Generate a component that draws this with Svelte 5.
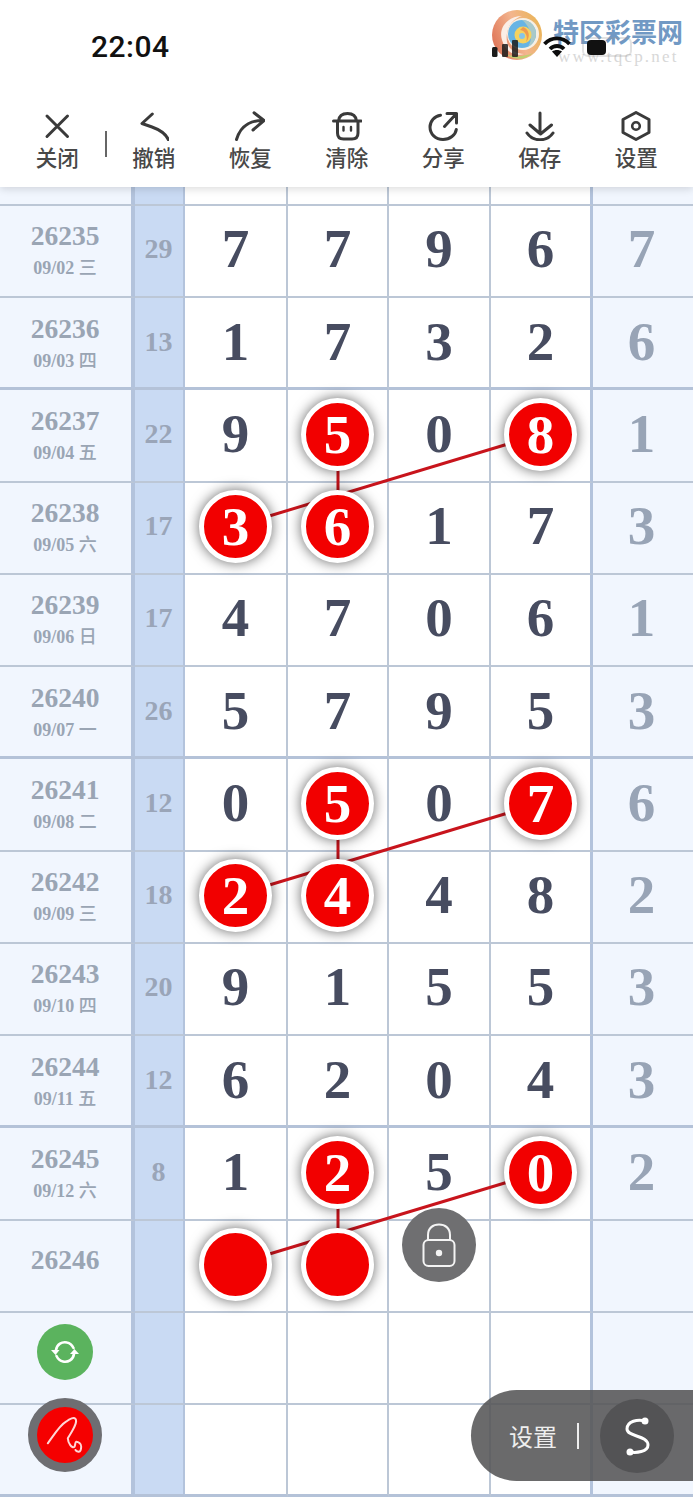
<script>
	const tools = [
		{ label: '关闭', icon: 'close' },
		{ label: '撤销', icon: 'undo' },
		{ label: '恢复', icon: 'redo' },
		{ label: '清除', icon: 'clear' },
		{ label: '分享', icon: 'share' },
		{ label: '保存', icon: 'save' },
		{ label: '设置', icon: 'gear' }
	];

	// hit = positions of the four digits that carry a red ball
	const rows = [
		{ no: '26235', date: '09/02', day: '三', sum: '29', nums: ['7', '7', '9', '6'], tail: '7', kind: 'mid', hit: [] },
		{ no: '26236', date: '09/03', day: '四', sum: '13', nums: ['1', '7', '3', '2'], tail: '6', kind: 'last', hit: [] },
		{ no: '26237', date: '09/04', day: '五', sum: '22', nums: ['9', '5', '0', '8'], tail: '1', kind: 'first', hit: [1, 3] },
		{ no: '26238', date: '09/05', day: '六', sum: '17', nums: ['3', '6', '1', '7'], tail: '3', kind: 'mid', hit: [0, 1] },
		{ no: '26239', date: '09/06', day: '日', sum: '17', nums: ['4', '7', '0', '6'], tail: '1', kind: 'mid', hit: [] },
		{ no: '26240', date: '09/07', day: '一', sum: '26', nums: ['5', '7', '9', '5'], tail: '3', kind: 'last', hit: [] },
		{ no: '26241', date: '09/08', day: '二', sum: '12', nums: ['0', '5', '0', '7'], tail: '6', kind: 'first', hit: [1, 3] },
		{ no: '26242', date: '09/09', day: '三', sum: '18', nums: ['2', '4', '4', '8'], tail: '2', kind: 'mid', hit: [0, 1] },
		{ no: '26243', date: '09/10', day: '四', sum: '20', nums: ['9', '1', '5', '5'], tail: '3', kind: 'mid', hit: [] },
		{ no: '26244', date: '09/11', day: '五', sum: '12', nums: ['6', '2', '0', '4'], tail: '3', kind: 'last', hit: [] },
		{ no: '26245', date: '09/12', day: '六', sum: '8', nums: ['1', '2', '5', '0'], tail: '2', kind: 'first', hit: [1, 3] },
		{ no: '26246', date: '', day: '', sum: '', nums: ['', '', '', ''], tail: '', kind: 'mid', hit: [0, 1] }
	];

	const links = [
		[541, 434, 236, 526],
		[338, 434, 338, 526],
		[541, 803, 236, 895],
		[338, 803, 338, 895],
		[541, 1172, 236, 1264],
		[338, 1172, 338, 1264]
	];
</script>

{#snippet toolIcon(name)}
	<svg class="tool-icon" viewBox="0 0 30 30" fill="none" stroke="#3a3a3a" stroke-width="3" stroke-linecap="round" stroke-linejoin="round">
		{#if name === 'close'}
			<path d="M5 5 L25.500 25.500 M25.500 5 L5 25.500" />
		{:else if name === 'undo'}
			<path d="M13.300 3 L3 12.500 L13 16 C20 18.500 27 23 29.500 29" />
		{:else if name === 'redo'}
			<path d="M19 1.800 L29 9.500 L18 19 M29 9.500 C18 9 6 13 1.500 28.500" />
		{:else if name === 'clear'}
			<path d="M6.500 10 C7 5 10.500 2.500 15.500 2.500 C20.500 2.500 24 5 24.500 10 M1.500 10 H29 M5.500 10 V22 C5.500 26 7.500 28 11.500 28 H20 C24 28 26 26 26 22 V10" />
			<path d="M11.500 16 V19.500 M19 16 V19.500" stroke-width="2.400" />
		{:else if name === 'share'}
			<path d="M12.500 4.200 C6.500 5 2 10 2 16 C2 23 7.500 28.500 15 28.500 C22 28.500 27.500 24 28.300 18.500 M16.500 15.500 L28.500 2.500 M19 2.500 H28.500 V12" />
		{:else if name === 'save'}
			<path d="M15 2 V22.500 M5 14 L15.500 23 L26.500 14 M2 22 C8 31 22 31 28 22" />
		{:else}
			<path d="M15 1.500 L28 8.500 V21.500 L15 28.500 L2 21.500 V8.500 Z" />
			<circle cx="15" cy="15" r="3.800" stroke-width="2.600" />
		{/if}
	</svg>
{/snippet}

<div class="page">
	<header>
		<div class="status">
			<span class="time">22:04</span>
			<div class="status-icons">
				<svg width="26" height="18" viewBox="0 0 26 18" fill="#1c1c1c">
					<rect x="0" y="8" width="5.500" height="10" rx="1.500" />
					<rect x="10" y="5" width="6" height="13" rx="1" opacity="0.85" />
					<rect x="20" y="1" width="6" height="17" rx="1" opacity="0.85" />
				</svg>
				<svg width="28" height="21" viewBox="0 0 28 21" fill="none" stroke="#0c0c0c" stroke-width="3.800">
					<path d="M1.500 8 C8.500 0.500 19.500 0.500 26.500 8" />
					<path d="M7 13 C11 9 17 9 21 13" />
					<path d="M14 21 L9 15.500 C12 13.500 16 13.500 19 15.500 Z" fill="#0c0c0c" stroke="none" />
				</svg>
				<div class="battery"><span></span></div>
			</div>
		</div>

		<div class="mark">
			<svg class="swirl" viewBox="0 0 50 50">
				<defs>
					<linearGradient id="swirlRim" x1="0" y1="0.6" x2="1" y2="0.2">
						<stop offset="0" stop-color="#e0795c" />
						<stop offset="0.5" stop-color="#f3b58e" />
						<stop offset="1" stop-color="#e9b452" />
					</linearGradient>
				</defs>
				<circle cx="25" cy="25" r="25" fill="url(#swirlRim)" />
				<path d="M10 30 C6 18 16 6 30 6 C20 9 13 18 15 32 C17 40 24 44 32 44 C22 47 13 41 10 30 Z" fill="#fbeee6" />
				<path d="M14 44 C22 51 34 50 41 43 C32 47 22 47 14 44 Z" fill="#bfd070" />
				<circle cx="31" cy="24" r="16" fill="#f6efe4" />
				<circle cx="30" cy="24" r="14" fill="#67b4e4" />
				<path d="M30 10 C38 10 44 16 44 24 C44 30 40 35 36 37 C39 32 40 27 38 21 C36 16 33 12 30 10 Z" fill="#a9c9c9" />
				<circle cx="31" cy="25" r="8.500" fill="#f5d260" />
				<path d="M31 17 C37 19 39 27 34 32 C36 27 34 21 28 20 Z" fill="#ee9a50" />
				<circle cx="30" cy="26" r="3" fill="#86c4e8" />
			</svg>
			<div class="mark-text">
				<span class="mark-name">特区彩票网</span>
				<span class="mark-url">www.tqcp.net</span>
			</div>
		</div>

		<nav class="tools">
			{#each tools as tool, i}
				<div class="tool">
					{@render toolIcon(tool.icon)}
					<span>{tool.label}</span>
					{#if i === 0}<i class="tool-sep"></i>{/if}
				</div>
			{/each}
		</nav>
	</header>

	<div class="row spacer">
		<div class="c-no"></div><div class="c-sum"></div>
		<div class="c-num"></div><div class="c-num"></div><div class="c-num"></div><div class="c-num"></div>
		<div class="c-tail"></div>
	</div>

	{#each rows as row}
		<div class="row {row.kind}">
			<div class="c-no" class:solo={!row.date}>
				<b class="no">{row.no}</b>
				{#if row.date}
					<small class="date">{row.date} <em>{row.day}</em></small>
				{/if}
			</div>
			<div class="c-sum">{row.sum}</div>
			{#each row.nums as n, i}
				<div class="c-num">
					{#if row.hit.includes(i)}
						<span class="ball">{n}</span>
					{:else}
						<span class="digit">{n}</span>
					{/if}
				</div>
			{/each}
			<div class="c-tail"><span class="digit">{row.tail}</span></div>
		</div>
	{/each}

	<div class="row mid">
		<div class="c-no sync-cell">
			<div class="sync">
				<svg viewBox="0 0 32 32" fill="none" stroke="#fff" stroke-width="2.600" stroke-linecap="round">
					<path d="M7 14 C8 8 13 5.500 18 6.500 C21 7 23 9 24.500 12" />
					<path d="M25 18 C24 24 19 26.500 14 25.500 C11 25 9 23 7.500 20" />
					<path d="M2 14 L6.500 19 L10.500 14 Z M21 18 L25.500 13 L30 18 Z" fill="#fff" stroke="none" />
				</svg>
			</div>
		</div>
		<div class="c-sum"></div>
		<div class="c-num"></div><div class="c-num"></div><div class="c-num"></div><div class="c-num"></div>
		<div class="c-tail"></div>
	</div>
	<div class="row last">
		<div class="c-no pen-cell">
			<div class="pen">
				<svg viewBox="0 0 56 56" fill="none" stroke="#ffd6d6" stroke-width="2" stroke-linecap="round" stroke-linejoin="round">
					<path d="M10.800 36.300 C17 28 23 18 29 14.700 C33 11.500 37 10 38.500 12 C41 15 36 23 30.800 31.300 C31 36 35 42 37.500 39.700 C38.500 38 38 35 39.200 34.700 C41 34.500 44.500 37 44.200 39.700 C44 42.500 43.500 45 41.500 44.700 C40 44.500 39 44 38.500 43" />
				</svg>
			</div>
		</div>
		<div class="c-sum"></div>
		<div class="c-num"></div><div class="c-num"></div><div class="c-num"></div><div class="c-num"></div>
		<div class="c-tail"></div>
	</div>

	<!-- connector lines sit above the grid, below the balls -->
	<svg class="links" viewBox="0 0 693 1500">
		{#each links as [x1, y1, x2, y2]}
			<line {x1} {y1} {x2} {y2} />
		{/each}
	</svg>

	<div class="lock">
		<svg viewBox="0 0 34 44" fill="none" stroke="#f4f4f4" stroke-width="2">
			<rect x="1.500" y="17" width="31" height="26" rx="5" />
			<path d="M6 17 V12 C6 5 11 1.500 17 1.500 C23 1.500 28 5 28 12 V17" />
			<circle cx="17" cy="30" r="3.200" fill="#f4f4f4" stroke="none" />
		</svg>
	</div>

	<div class="pill">
		<span class="pill-label">设置</span>
		<i class="pill-sep"></i>
		<div class="pill-btn">
			<svg viewBox="0 0 26 40" fill="none" stroke="#fff" stroke-width="3" stroke-linecap="round">
				<path d="M21 5 C14 3 3 5 3 13 C3 21 24 19 24 29 C24 36 12 37 6 36" />
				<circle cx="21" cy="5" r="3.500" fill="#fff" stroke="none" />
				<circle cx="6" cy="36" r="3.500" fill="#fff" stroke="none" />
			</svg>
		</div>
	</div>
</div>

<style>
	:global(body) {
		margin: 0;
		background: #fff;
	}

	.page {
		position: relative;
		width: 693px;
		height: 1500px;
		overflow: hidden;
		font-family: 'Liberation Serif', 'Noto Sans CJK SC', serif;
	}

	header {
		position: relative;
		z-index: 5;
		height: 187px;
		background: #fff;
		box-shadow: 0 2px 8px rgba(0, 0, 0, 0.14);
	}

	.status {
		display: flex;
		align-items: flex-start;
		height: 111px;
		padding: 29px 0 0 91px;
		box-sizing: border-box;
	}

	.time {
		font: 500 30px/36px Roboto, sans-serif;
		letter-spacing: 0.5px;
		color: #111;
	}

	.status-icons {
		position: relative;
		z-index: 2;
		display: flex;
		align-items: flex-end;
		gap: 25px;
		margin: 8px 61px 0 auto;
		height: 20px;
	}

	.battery {
		width: 50px;
		height: 20px;
		margin-left: -14px;
		padding: 1px 0 0 3px;
		border: 2px solid rgba(150, 150, 150, 0.28);
		border-radius: 6px;
		box-sizing: border-box;
	}

	.battery span {
		display: block;
		width: 19px;
		height: 15px;
		background: #111;
		border-radius: 4px;
	}

	.mark {
		position: absolute;
		top: 10px;
		left: 492px;
		display: flex;
		gap: 11px;
	}

	.swirl {
		width: 50px;
		height: 50px;
	}

	.mark-text {
		display: flex;
		flex-direction: column;
		padding-top: 5px;
	}

	.mark-name {
		font: 700 26px/32px 'Noto Sans CJK SC', sans-serif;
		color: #7199c4;
	}

	.mark-url {
		font: 17px/18px 'Liberation Serif', serif;
		letter-spacing: 2.200px;
		margin: 1px 0 0 5px;
		color: #d8d8d8;
		white-space: nowrap;
	}

	.tools {
		display: grid;
		grid-template-columns: repeat(7, 96.5px);
		padding-left: 9px;
	}

	.tool {
		position: relative;
		display: flex;
		flex-direction: column;
		align-items: center;
	}

	.tool-icon {
		width: 30px;
		height: 30px;
	}

	.tool span {
		margin-top: 1px;
		font: 500 21.500px/30px 'Noto Sans CJK SC', sans-serif;
		color: #484848;
	}

	.tool-sep {
		position: absolute;
		left: 96px;
		top: 20px;
		width: 2px;
		height: 26px;
		background: #666;
	}

	.row {
		display: grid;
		grid-template-columns: 135px 50px 103px 101px 102px 102px 100px;
		grid-template-rows: minmax(0, 1fr);
		box-sizing: border-box;
		height: 92px;
	}

	.row > div {
		display: flex;
		flex-direction: column;
		align-items: center;
		justify-content: center;
		box-sizing: border-box;
		border-bottom: 2px solid #bcc7d6;
		padding-bottom: 4px;
	}

	.row.spacer {
		height: 19px;
	}

	.row.spacer > div {
		padding: 0;
	}

	.row.first {
		height: 93px;
	}

	.row.first > div {
		padding-bottom: 3px;
	}

	.row.last > div {
		padding-bottom: 1px;
		border-bottom: 3px solid #b4c2d8;
	}

	.row > .c-no {
		background: #f1f6fe;
		border-right: 4px solid #b3c3dc;
		padding-top: 2px;
		padding-right: 1px;
	}

	.row > .c-no.solo,
	.row > .c-no.sync-cell {
		padding-top: 0;
		padding-bottom: 12px;
	}

	.row > .c-no.pen-cell {
		padding-top: 0;
		padding-bottom: 29px;
	}

	.no {
		font-size: 27.500px;
		line-height: 30px;
		color: #9aa5b4;
	}

	.date {
		margin-top: 2px;
		font-size: 18px;
		line-height: 22px;
		font-weight: 700;
		color: #9aa5b4;
	}

	.date em {
		font: 500 18px 'Noto Sans CJK SC', sans-serif;
	}

	.row > .c-sum {
		background: #c9daf3;
		border-right: 2px solid #b3c3dc;
		padding-right: 1px;
		font-size: 28px;
		font-weight: 700;
		color: #9aa5b8;
	}

	.c-num {
		background: #fff;
		border-right: 2px solid #bcc7d6;
		font-size: 55px;
		font-weight: 700;
		color: #474c60;
	}

	.c-num:nth-child(6) {
		border-right: 3px solid #b3c3dc;
	}

	.digit {
		margin-bottom: 2px;
	}

	.row > .c-tail {
		background: #f1f6fe;
		padding-right: 3px;
		font-size: 55px;
		font-weight: 700;
		color: #98a4b6;
	}

	.ball {
		position: relative;
		z-index: 3;
		display: flex;
		align-items: center;
		justify-content: center;
		flex: none;
		width: 73px;
		height: 73px;
		box-sizing: border-box;
		border: 5px solid #fff;
		border-radius: 50%;
		background: #f20000;
		box-shadow: 0 0 13px rgba(0, 0, 0, 0.6);
		color: #fff;
	}

	.links {
		position: absolute;
		inset: 0;
		z-index: 2;
		width: 693px;
		height: 1500px;
		pointer-events: none;
	}

	.links line {
		stroke: #c8141c;
		stroke-width: 3;
	}

	.sync {
		flex: none;
		width: 56px;
		height: 56px;
		display: flex;
		align-items: center;
		justify-content: center;
		border-radius: 50%;
		background: #5bb35e;
	}

	.sync svg {
		width: 32px;
		height: 32px;
	}

	.pen {
		flex: none;
		position: relative;
		width: 74px;
		height: 74px;
		box-sizing: border-box;
		border: 9px solid #6e6e72;
		border-radius: 50%;
		background: #f50000;
	}

	.pen svg {
		display: block;
		width: 56px;
		height: 56px;
	}

	.lock {
		position: absolute;
		z-index: 4;
		left: 402px;
		top: 1208px;
		width: 74px;
		height: 74px;
		display: flex;
		align-items: center;
		justify-content: center;
		border-radius: 50%;
		background: #6f6f71;
	}

	.lock svg {
		width: 34px;
		height: 44px;
	}

	.pill {
		position: absolute;
		z-index: 4;
		left: 471px;
		right: 0;
		top: 1390px;
		height: 91px;
		display: flex;
		align-items: center;
		padding-left: 38px;
		box-sizing: border-box;
		border-radius: 46px 0 0 46px;
		background: rgba(85, 85, 87, 0.88);
	}

	.pill-label {
		font: 400 24px 'Noto Sans CJK SC', sans-serif;
		color: #eee;
	}

	.pill-sep {
		width: 2px;
		height: 26px;
		margin-left: 20px;
		background: #eee;
	}

	.pill-btn {
		width: 74px;
		height: 74px;
		margin-left: 21px;
		display: flex;
		align-items: center;
		justify-content: center;
		border-radius: 50%;
		background: #535355;
	}

	.pill-btn svg {
		width: 26px;
		height: 40px;
	}
</style>
